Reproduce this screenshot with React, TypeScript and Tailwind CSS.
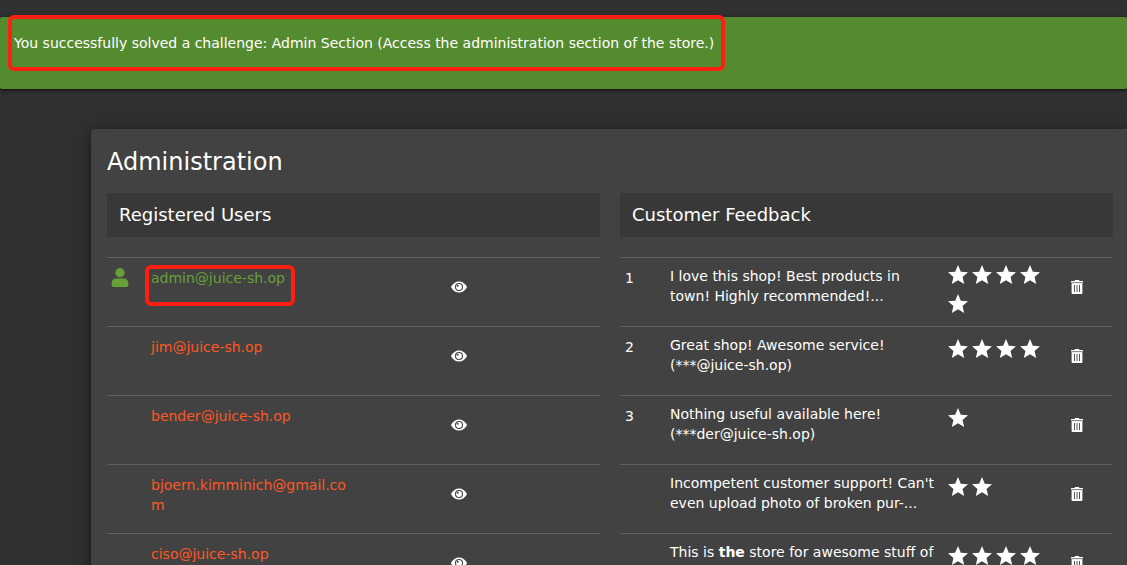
import type { ReactNode } from 'react';
import { MdStar } from 'react-icons/md';

type User = { email: string; active?: boolean };
type Feedback = { user: string; comment: ReactNode; rating: number };

const users: User[] = [
  { email: 'admin@juice-sh.op', active: true },
  { email: 'jim@juice-sh.op' },
  { email: 'bender@juice-sh.op' },
  { email: 'bjoern.kimminich@gmail.com' },
  { email: 'ciso@juice-sh.op' },
];

const feedback: Feedback[] = [
  { user: '1', comment: 'I love this shop! Best products in town! Highly recommended!...', rating: 5 },
  { user: '2', comment: 'Great shop! Awesome service! (***@juice-sh.op)', rating: 4 },
  { user: '3', comment: 'Nothing useful available here! (***der@juice-sh.op)', rating: 1 },
  { user: '', comment: "Incompetent customer support! Can't even upload photo of broken pur-...", rating: 2 },
  {
    user: '',
    comment: (
      <>
        This is <b>the</b> store for awesome stuff of
      </>
    ),
    rating: 4,
  },
];

function UserIcon() {
  return (
    <svg viewBox="0 0 18 20" className="h-5 w-[18px]" fill="currentColor" aria-hidden="true">
      <circle cx="9" cy="4.700" r="4.600" />
      <path d="M5 10.400h8c2.400 0 4.300 1.900 4.300 4.300v2.500c0 1-.8 1.700-1.700 1.700H2.400c-.9 0-1.700-.7-1.700-1.700v-2.500c0-2.400 1.900-4.300 4.300-4.300z" />
    </svg>
  );
}

function EyeIcon() {
  return (
    <svg viewBox="0 0 16 16" className="h-4 w-4" aria-hidden="true">
      <path d="M.2 7.500C1.800 4.500 4.700 2.500 8 2.500s6.200 2 7.800 5c.2.300.2.700 0 1-1.600 3-4.500 5-7.800 5s-6.200-2-7.800-5c-.2-.3-.2-.7 0-1z" fill="currentColor" />
      <circle cx="8" cy="8" r="3.500" fill="none" stroke="#424242" strokeWidth="1.100" />
      <circle cx="6.700" cy="6.700" r="1" fill="#424242" />
    </svg>
  );
}

function TrashIcon() {
  return (
    <svg viewBox="0 0 14 14" className="h-3.5 w-3.5" aria-hidden="true">
      <path d="M1 1h3.600L5 0h4l.4 1H13v1.600H1z" fill="currentColor" />
      <path d="M1.600 3h10.800v10c0 .6-.4 1-1 1H2.600c-.6 0-1-.4-1-1z" fill="currentColor" />
      <path d="M1.600 2.600h10.800v.6H1.600z" fill="#424242" opacity="0.5" />
      <path d="M4.500 5v7M7 5v7M9.500 5v7" stroke="#424242" strokeWidth="0.900" />
    </svg>
  );
}

function SectionTitle({ children }: { children: ReactNode }) {
  return <h2 className="mb-5 bg-[#383838] px-3 py-2 text-lg leading-7">{children}</h2>;
}

function UserRow({ email, active }: User) {
  return (
    <tr className="h-[69px] border-t border-[#5e5e5e] align-top">
      <td className="pt-2.5 pl-1 text-[#689f38]">{active && <UserIcon />}</td>
      <td className={active ? 'pt-2.5 text-[#689f38]' : 'pt-2.5 text-[#ff5722]'}>
        <span className="relative inline-block break-all">
          {email}
          {active && (
            <span
              aria-hidden="true"
              className="pointer-events-none absolute -top-[3px] -right-2.5 -bottom-[18px] -left-1.5 rounded-md border-4 border-[#ff1f12]"
            />
          )}
        </span>
      </td>
      <td className="pt-[21px]">
        <button type="button" aria-label={`Show ${email}`} className="mx-auto block">
          <EyeIcon />
        </button>
      </td>
      <td />
    </tr>
  );
}

function FeedbackRow({ user, comment, rating }: Feedback) {
  return (
    <tr className="h-[69px] border-t border-[#5e5e5e] align-top">
      <td className="pt-2.5 pl-[5px]">{user}</td>
      <td className="pt-2 pr-2">{comment}</td>
      <td className={rating > 4 ? 'pt-[5px]' : 'pt-2.5'}>
        <div className="flex flex-wrap gap-y-[5px]" role="img" aria-label={`${rating} stars`}>
          {Array.from({ length: rating }, (_, i) => (
            <MdStar key={i} className="h-6 w-6" />
          ))}
        </div>
      </td>
      <td className="pt-5 pr-0.5">
        <button type="button" aria-label="Delete feedback" className="mx-auto block p-0.5">
          <TrashIcon />
        </button>
      </td>
    </tr>
  );
}

export default function App() {
  return (
    <div className="h-screen overflow-hidden bg-[#303030] pt-[17px] font-['DejaVu_Sans',sans-serif] text-sm leading-5 text-white">
      <div
        role="status"
        className="flex h-[72px] items-start rounded-xs bg-[#558b2f] px-3.5 pt-4 shadow-[0_3px_1px_-2px_rgba(0,0,0,0.2),0_2px_2px_0_rgba(0,0,0,0.14),0_1px_5px_0_rgba(0,0,0,0.4)]"
      >
        <p className="relative">
          You successfully solved a challenge: Admin Section (Access the administration section of the store.)
          <span
            aria-hidden="true"
            className="pointer-events-none absolute -top-[18px] -right-[11px] -bottom-[18px] -left-1.5 rounded-md border-4 border-[#ff1f12]"
          />
        </p>
      </div>

      <main className="mt-10 ml-[91px] rounded-tl bg-[#424242] pt-4 pr-3.5 pb-4 pl-4 shadow-[0_3px_5px_-1px_rgba(0,0,0,0.2),0_6px_10px_0_rgba(0,0,0,0.14),0_1px_18px_0_rgba(0,0,0,0.3)]">
        <h1 className="mb-3.5 text-2xl leading-[34px]">Administration</h1>
        <div className="grid grid-cols-2 gap-5">
          <section>
            <SectionTitle>Registered Users</SectionTitle>
            <table aria-label="Registered Users" className="w-full table-fixed border-collapse">
              <colgroup>
                <col className="w-11" />
                <col className="w-[42%]" />
                <col className="w-[41%]" />
                <col />
              </colgroup>
              <tbody>
                {users.map((u) => (
                  <UserRow key={u.email} {...u} />
                ))}
              </tbody>
            </table>
          </section>
          <section>
            <SectionTitle>Customer Feedback</SectionTitle>
            <table aria-label="Customer Feedback" className="w-full table-fixed border-collapse">
              <colgroup>
                <col className="w-[50px]" />
                <col />
                <col className="w-[97px]" />
                <col className="w-[70px]" />
              </colgroup>
              <tbody>
                {feedback.map((f, i) => (
                  <FeedbackRow key={i} {...f} />
                ))}
              </tbody>
            </table>
          </section>
        </div>
      </main>
    </div>
  );
}
